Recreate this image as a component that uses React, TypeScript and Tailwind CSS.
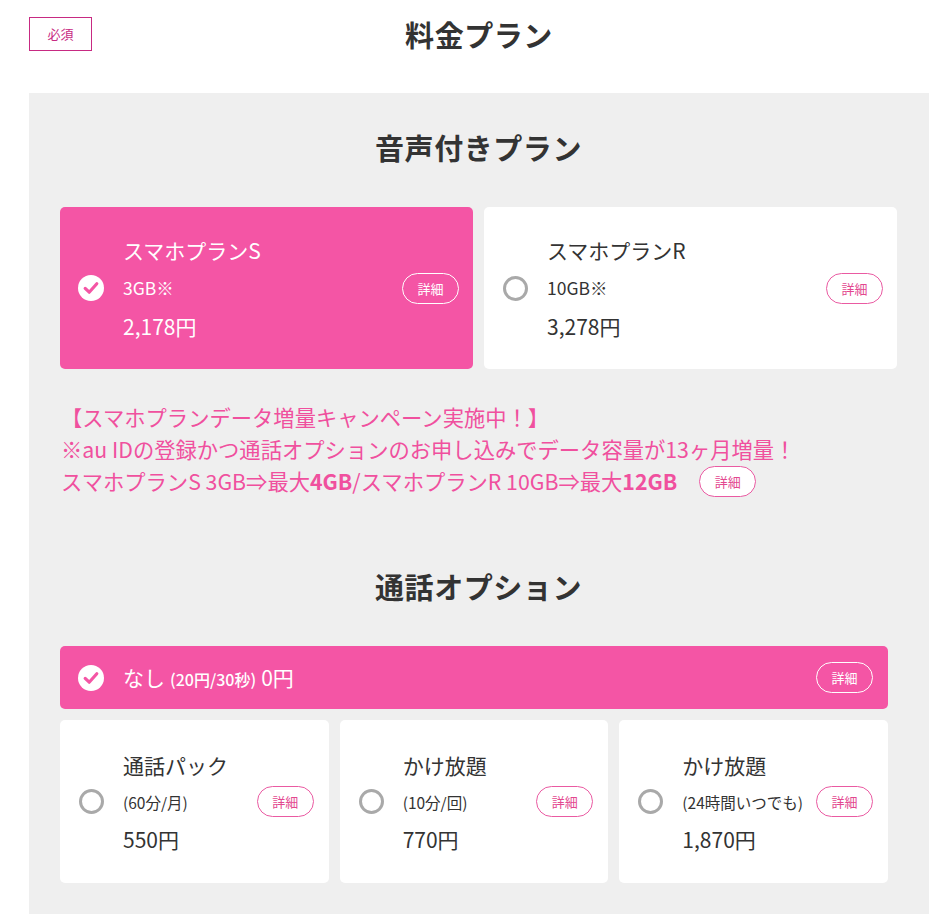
import React from "react";

const PINK = "bg-[#f455a5]";

function CheckIcon() {
  return (
    <svg width="26" height="26" viewBox="0 0 26 26" className="shrink-0">
      <circle cx="13" cy="13" r="13" fill="#ffffff" />
      <path d="M7.2 13.4 L11.2 17.2 L18.8 8.8" fill="none" stroke="#f455a5" strokeWidth="3.2" strokeLinecap="round" strokeLinejoin="round" />
    </svg>
  );
}

function Radio() {
  return <span className="block w-[25px] h-[25px] shrink-0 rounded-full border-[3px] border-[#a9a9a9] bg-white" />;
}

function Detail({ on }: { on?: boolean }) {
  return (
    <span
      className={
        "shrink-0 flex items-center justify-center w-[57px] h-[31px] rounded-full border text-[13px] leading-none " +
        (on ? "border-white text-white" : "border-[#ea5aa2] text-[#e3478f] bg-white")
      }
    >
      詳細
    </span>
  );
}

function PlanCard({ on, name, data, price }: { on?: boolean; name: string; data: string; price: string }) {
  return (
    <div
      className={
        "flex items-center h-[162px] rounded-[5px] pr-[14px] " +
        (on ? PINK + " text-white pl-[18px]" : "bg-white text-[#333] pl-[19px]")
      }
    >
      {on ? <CheckIcon /> : <Radio />}
      <div className="flex-1 flex flex-col ml-[19px]">
        <span className="text-[21px] leading-[38px]">{name}</span>
        <span className="text-[17.5px] leading-[38px]">{data}</span>
        <span className="text-[21px] leading-[38px]">{price}</span>
      </div>
      <Detail on={on} />
    </div>
  );
}

function CallCard({ name, sub, price }: { name: string; sub: string; price: string }) {
  return (
    <div className="flex items-center h-[163px] rounded-[5px] bg-white text-[#333] pl-[19px] pr-[15px]">
      <Radio />
      <div className="flex-1 flex flex-col ml-[19px]">
        <span className="text-[21px] leading-[36px]">{name}</span>
        <span className="text-[15.5px] leading-[38px]">{sub}</span>
        <span className="text-[21px] leading-[36px]">{price}</span>
      </div>
      <Detail />
    </div>
  );
}

export default function App() {
  return (
    <div className="w-[942px] min-h-[924px] bg-white text-[#333]" style={{ fontFamily: '"Noto Sans CJK JP", "Noto Sans", sans-serif' }}>
      <div className="ml-[29px] w-[900px]">
        <div className="grid grid-cols-[1fr_auto_1fr] items-start h-[93px] pt-[17px]">
          <span className="justify-self-start flex items-center justify-center w-[63px] h-[34px] border border-[#c72a82] text-[#c72a82] text-[13px]">
            必須
          </span>
          <h1 className="text-[29px] font-bold leading-[34px] tracking-[0.02em]">料金プラン</h1>
          <span />
        </div>
        <div className="bg-[#efefef] pt-[34px] pb-[31px] pl-[31px] pr-[32px]">
          <h2 className="text-center text-[29px] font-bold leading-[40px] tracking-[0.02em]">音声付きプラン</h2>
          <div className="grid grid-cols-2 gap-[11px] mt-[40px]">
            <PlanCard on name="スマホプランS" data="3GB※" price="2,178円" />
            <PlanCard name="スマホプランR" data="10GB※" price="3,278円" />
          </div>
          <div className="mt-[32px] pl-[1px] text-[#f0509e] text-[21.3px] leading-[32px] whitespace-nowrap">
            <p>【スマホプランデータ増量キャンペーン実施中！】</p>
            <p>※au IDの登録かつ通話オプションのお申し込みでデータ容量が13ヶ月増量！</p>
            <p className="flex items-center">
              <span>
                スマホプランS 3GB⇒最大<b className="font-bold">4GB</b>/スマホプランR 10GB⇒最大<b className="font-bold">12GB</b>
              </span>
              <span className="ml-[22px]">
                <Detail />
              </span>
            </p>
          </div>
          <h2 className="mt-[69px] text-center text-[29px] font-bold leading-[40px] tracking-[0.02em]">通話オプション</h2>
          <div className="w-[828px] mt-[40px]">
            <div className={"flex items-center h-[63px] rounded-[5px] text-white pl-[18px] pr-[15px] " + PINK}>
              <CheckIcon />
              <div className="flex-1 ml-[19px] flex items-baseline">
                <span className="text-[21px]">なし</span>
                <span className="text-[16px] font-medium ml-[5px]">(20円/30秒)</span>
                <span className="text-[21px] ml-[5px]">0円</span>
              </div>
              <Detail on />
            </div>
            <div className="grid grid-cols-3 gap-[11px] mt-[11px]">
              <CallCard name="通話パック" sub="(60分/月)" price="550円" />
              <CallCard name="かけ放題" sub="(10分/回)" price="770円" />
              <CallCard name="かけ放題" sub="(24時間いつでも)" price="1,870円" />
            </div>
          </div>
        </div>
      </div>
    </div>
  );
}
